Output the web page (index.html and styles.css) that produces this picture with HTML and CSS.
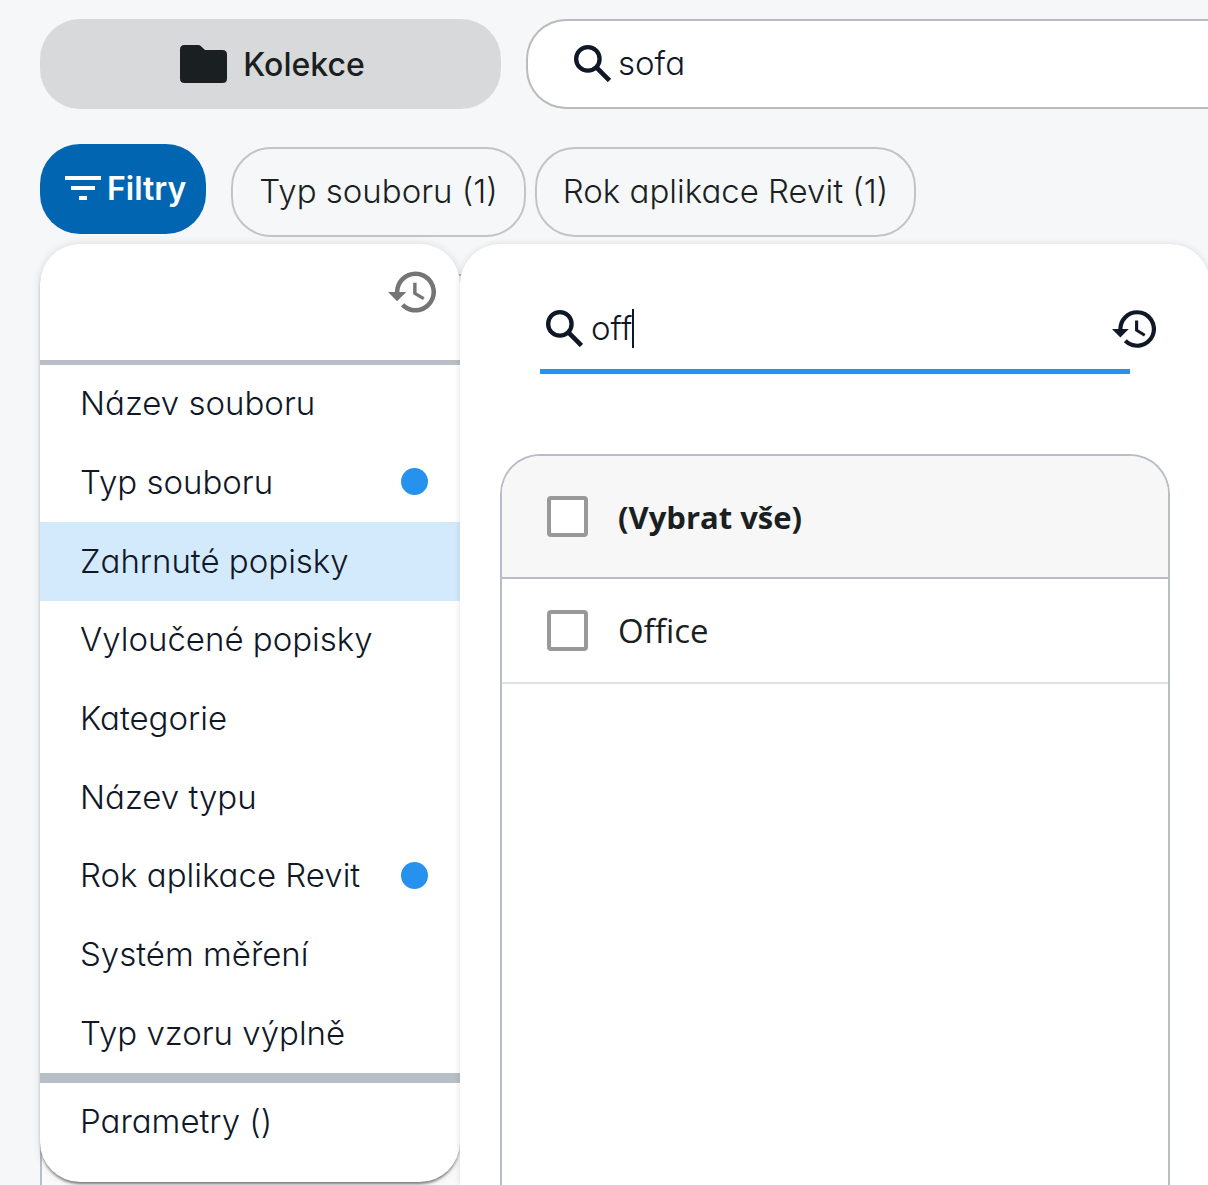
FILE: index.html
```html
<!DOCTYPE html>
<html lang="cs">
<head>
<meta charset="utf-8">
<meta name="viewport" content="width=device-width, initial-scale=1">
<title>Kolekce</title>
<link rel="stylesheet" href="styles.css">
</head>
<body>
<svg class="sprite" aria-hidden="true">
  <symbol id="search" viewBox="0 0 36 36"><circle cx="13.500" cy="13.500" r="11.400" fill="none" stroke="currentColor" stroke-width="4.200"/><path d="M22.500 22.500 34.500 34.500" fill="none" stroke="currentColor" stroke-width="4.600"/></symbol>
  <symbol id="history" viewBox="1 3 21 18"><path fill="currentColor" d="M13 3a9 9 0 0 0-9 9H1l3.890 3.890.07.140L9 12H6a7 7 0 1 1 7 7 6.970 6.970 0 0 1-4.940-2.060l-1.420 1.420A9 9 0 1 0 13 3zm-1 5v5l4.280 2.540.720-1.210-3.500-2.080V8z"/></symbol>
</svg>
<header class="topbar">
  <button class="collection" type="button">
    <svg class="folder" viewBox="0 0 47 38" aria-hidden="true"><path fill="currentColor" d="M4.500 0H18q2 0 3.300 1.400L25 5h17.500Q47 5 47 9.500v24q0 4.500-4.500 4.500h-38Q0 38 0 33.500v-29Q0 0 4.500 0z"/></svg>
    Kolekce
  </button>
  <label class="search">
    <svg class="icon-search" aria-hidden="true"><use href="#search"/></svg>
    <input class="search-input" type="text" value="sofa" aria-label="Hledat">
  </label>
</header>
<nav class="filters">
  <button class="filter-toggle" type="button">
    <svg class="icon-filter" viewBox="0 0 36 24" aria-hidden="true"><path fill="currentColor" d="M0 0h36v4H0zM6 10h24v4H6zM14 20h8v4h-8z"/></svg>
    Filtry
  </button>
  <button class="chip" type="button">Typ souboru (1)</button>
  <button class="chip" type="button">Rok aplikace Revit (1)</button>
</nav>
<main class="results">
  <div class="popover">
    <aside class="menu">
      <div class="menu-head">
        <button class="reset" type="button" aria-label="Obnovit filtry"><svg class="icon-history large" aria-hidden="true"><use href="#history"/></svg></button>
      </div>
      <ul class="menu-list">
        <li><a class="item" href="#">Název souboru</a></li>
        <li><a class="item marked" href="#">Typ souboru</a></li>
        <li><a class="item selected" href="#">Zahrnuté popisky</a></li>
        <li><a class="item" href="#">Vyloučené popisky</a></li>
        <li><a class="item" href="#">Kategorie</a></li>
        <li><a class="item" href="#">Název typu</a></li>
        <li><a class="item marked" href="#">Rok aplikace Revit</a></li>
        <li><a class="item" href="#">Systém měření</a></li>
        <li><a class="item" href="#">Typ vzoru výplně</a></li>
      </ul>
      <div class="menu-foot"><a class="item" href="#">Parametry ()</a></div>
    </aside>
    <section class="panel">
      <div class="panel-head">
        <label class="field">
          <svg class="icon-search" aria-hidden="true"><use href="#search"/></svg>
          <input class="field-input" type="text" value="off" size="2" aria-label="Hledat popisek">
          <span class="caret"></span>
        </label>
        <button class="reset dark" type="button" aria-label="Obnovit"><svg class="icon-history" aria-hidden="true"><use href="#history"/></svg></button>
      </div>
      <div class="options">
        <label class="option all"><input class="check" type="checkbox">(Vybrat vše)</label>
        <label class="option"><input class="check" type="checkbox">Office</label>
      </div>
    </section>
  </div>
</main>
</body>
</html>
```
FILE: styles.css
```css
* { box-sizing: border-box; }

body {
  margin: 0;
  height: 100vh;
  overflow: hidden;
  display: flex;
  flex-direction: column;
  padding: 19px 0 0 40px;
  background: #f6f7f9;
  color: #1a1f21;
  font-family: Inter, "Liberation Sans", sans-serif;
  font-size: 33px;
  font-weight: 300;
  font-feature-settings: "cv11";
}

button, input { font: inherit; font-feature-settings: inherit; color: inherit; }
button { cursor: pointer; }
svg { display: block; flex: none; }
.sprite { position: absolute; width: 0; height: 0; }

.topbar { display: flex; gap: 25px; height: 90px; flex: none; }

.collection {
  width: 461px;
  flex: none;
  display: flex;
  align-items: center;
  justify-content: center;
  gap: 16px;
  padding: 0 0 0 4px;
  border: 0;
  border-radius: 40px;
  background: #d8d9db;
  font-size: 32px;
  font-weight: 500;
}
.folder { width: 47px; height: 38px; }

.search {
  flex: 1;
  min-width: 0;
  display: flex;
  align-items: center;
  gap: 7px;
  padding: 0 0 2px 46px;
  border: 2px solid #bbb;
  border-right: 0;
  border-radius: 40px 0 0 40px;
  background: #fff;
  color: #101828;
  font-weight: 300;
}
.search-input { flex: 1; min-width: 0; padding: 0; border: 0; outline: 0; background: none; }
.icon-search { width: 37px; height: 37px; }

.filters { display: flex; align-items: flex-end; gap: 9px; margin-top: 35px; flex: none; }
.filter-toggle {
  height: 90px;
  margin: 0 16px 3px 0;
  padding: 0 20px 2px 25px;
  display: flex;
  align-items: center;
  gap: 6px;
  border: 0;
  border-radius: 40px;
  background: #0265b2;
  color: #fff;
  font-size: 32px;
  font-weight: 600;
}
.icon-filter { width: 36px; height: 24px; }
.chip {
  height: 90px;
  padding: 0 26px 2px;
  border: 2px solid #c3c4c6;
  border-radius: 40px;
  background: none;
  white-space: nowrap;
}

.results {
  position: relative;
  flex: 1;
  margin-top: 37px;
  border: solid #b9bdc8;
  border-width: 2px 0 0 2px;
  border-radius: 40px 0 0 0;
  background: #fafafa;
}
.popover {
  position: absolute;
  inset: -32px -2px 0;
  display: flex;
  align-items: flex-start;
  color: #101828;
}

.menu {
  width: 420px;
  flex: none;
  border-radius: 40px;
  background: #fff;
  box-shadow: 0 3px 3px -1px rgba(0, 0, 0, .5), 0 0 8px rgba(0, 0, 0, .12);
}
.menu-head {
  display: flex;
  justify-content: flex-end;
  height: 121px;
  padding: 27px 24px 0 0;
  border-bottom: 5px solid #b7bec5;
}
.reset { align-self: flex-start; padding: 0; border: 0; background: none; color: #757575; }
.icon-history { width: 44px; height: 38px; }
.icon-history.large { width: 48px; height: 42px; }
.menu-list {
  display: grid;
  grid-auto-rows: 1fr;
  height: 708px;
  margin: 0;
  padding: 0;
  list-style: none;
}
.item {
  display: flex;
  align-items: center;
  justify-content: space-between;
  height: 100%;
  padding: 0 32px 2px 40px;
  color: inherit;
  text-decoration: none;
  white-space: nowrap;
}
.selected { background: #d3e9fc; }
.marked::after { content: ""; width: 27px; height: 27px; border-radius: 50%; background: #2692ee; }
.menu-foot { height: 109px; padding-bottom: 21px; border-top: 10px solid #b7bec5; }

.panel {
  flex: 1;
  min-width: 0;
  align-self: stretch;
  display: flex;
  flex-direction: column;
  padding: 45px 40px 0;
  border-radius: 40px 40px 0 0;
  background: #fff;
  box-shadow: 0 0 6px rgba(0, 0, 0, .12);
}
.panel-head { display: flex; align-items: center; padding: 0 14px 0 40px; }
.field {
  flex: 1;
  min-width: 0;
  display: flex;
  align-items: center;
  height: 85px;
  padding: 0 0 2px 6px;
  border-bottom: 5px solid #2692ee;
}
.field-input {
  field-sizing: content;
  margin-left: 8px;
  padding: 0;
  border: 0;
  outline: 0;
  background: none;
  caret-color: transparent;
}
.caret { width: 2px; height: 39px; background: #101828; }
.dark { align-self: center; margin-left: -18px; padding-bottom: 6px; color: #101828; }

.options {
  flex: 1;
  margin-top: 80px;
  border: 2px solid #b9bdc8;
  border-bottom: 0;
  border-radius: 40px 40px 0 0;
  overflow: hidden;
  color: #1a1f21;
  font-family: "Open Sans", "Noto Sans", sans-serif;
  font-weight: 400;
}
.option {
  display: flex;
  align-items: center;
  gap: 30px;
  height: 105px;
  padding-left: 45px;
  border-bottom: 2px solid #dde1e8;
}
.all { height: 123px; background: #f7f7f7; border-color: #b9bdc8; font-size: 31px; font-weight: 700; }
.check {
  appearance: none;
  width: 41px;
  height: 41px;
  margin: 0;
  border: 4px solid #999;
  border-radius: 4px;
  background: #fff;
}
```
